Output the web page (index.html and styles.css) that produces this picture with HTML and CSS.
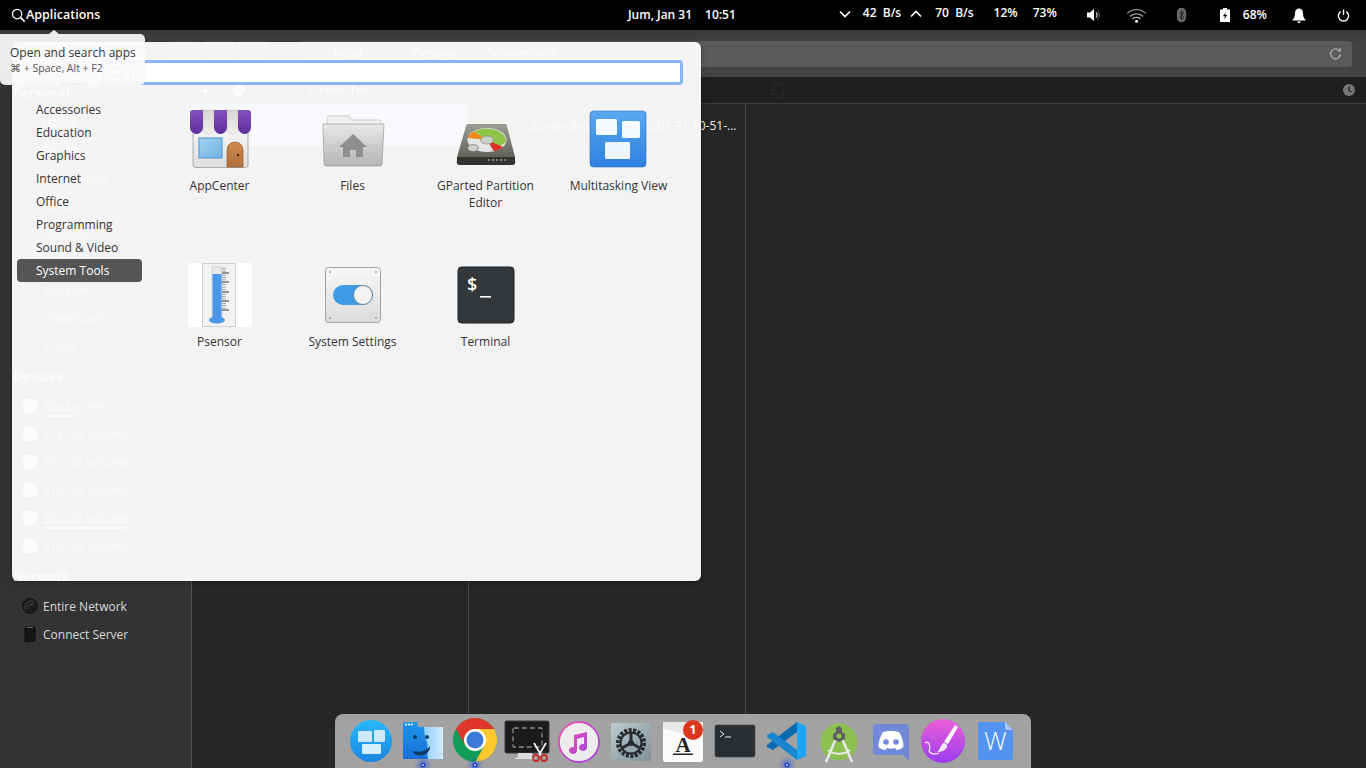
FILE: index.html
```html
<!DOCTYPE html>
<html lang="en">
<head>
<meta charset="utf-8">
<title>Desktop</title>
<link rel="stylesheet" href="styles.css">
</head>
<body>
<div class="screen">
  <header class="panel">
    <div class="panel-left">
      <svg class="i-search" viewBox="0 0 16 16"><circle cx="6.5" cy="6.5" r="5" fill="none" stroke="#fff" stroke-width="1.4"/><path d="M10.2 10.2 14.6 14.6" stroke="#fff" stroke-width="1.8"/></svg>
      <span class="apps-label">Applications</span>
    </div>
    <div class="panel-clock"><span>Jum, Jan 31</span><span>10:51</span></div>
    <div class="panel-right">
      <svg class="chev" viewBox="0 0 12 8"><path d="M1 1.5 6 6.5 11 1.5" fill="none" stroke="#fff" stroke-width="1.6"/></svg>
      <span class="net">42&nbsp; B/s</span>
      <svg class="chev" viewBox="0 0 12 8"><path d="M1 6.5 6 1.5 11 6.5" fill="none" stroke="#fff" stroke-width="1.6"/></svg>
      <span class="net net-up">70&nbsp; B/s</span>
      <span class="pct cpu">12%</span>
      <span class="pct mem">73%</span>
      <svg class="i-vol" viewBox="0 0 16 16"><path d="M1 5.5H4L8 2V14L4 10.500H1Z" fill="#fff"/><path d="M10 5.500A3.500 3.500 0 0 1 10 10.500" fill="none" stroke="#ccc" stroke-width="1.300"/><path d="M11.500 3.500A6.500 6.500 0 0 1 11.500 12.500" fill="none" stroke="#666" stroke-width="1"/></svg>
      <svg class="i-wifi" viewBox="0 0 22 16"><path d="M1 6A14 14 0 0 1 21 6" fill="none" stroke="#8a8a8a" stroke-width="1.200"/><path d="M4 9A10 10 0 0 1 18 9" fill="none" stroke="#bdbdbd" stroke-width="1.200"/><path d="M7 11.500A6 6 0 0 1 15 11.500" fill="none" stroke="#e6e6e6" stroke-width="1.300"/><circle cx="11" cy="14" r="1.600" fill="#fff"/></svg>
      <svg class="i-bt" viewBox="0 0 12 16"><rect x="1" y="0" width="10" height="16" rx="5" fill="#6a6a6a"/><path d="M3.500 5 8.500 10.500 6 13V3L8.500 5.500 3.500 11" fill="none" stroke="#1c1c1c" stroke-width="1"/></svg>
      <svg class="i-bat" viewBox="0 0 10 14"><path d="M3 0H7V1.500H10V14H0V1.500H3Z" fill="#fff"/><path d="M6 4 2.800 8.300H5L4 11.500 7.300 7H5Z" fill="#000"/></svg>
      <span class="pct bat">68%</span>
      <svg class="i-bell" viewBox="0 0 14 15"><path d="M7 0.500C9.800 0.500 11 3 11 5.500C11 8.500 12 10.500 13.500 11.800V12.500H0.500V11.800C2 10.500 3 8.500 3 5.500C3 3 4.200 0.500 7 0.500Z" fill="#fff"/><path d="M5 13.500H9L7.800 15H6.200Z" fill="#fff"/></svg>
      <svg class="i-pow" viewBox="0 0 14 14"><path d="M4 2.800A5.500 5.500 0 1 0 10 2.800" fill="none" stroke="#fff" stroke-width="1.500"/><path d="M7 0.500V6.500" stroke="#fff" stroke-width="1.500"/></svg>
    </div>
  </header>

  <section class="window">
    <div class="toolbar">
      <div class="view-btns"><span class="view-btn"></span><span class="view-btn"></span><span class="view-btn"></span></div>
      <div class="address">
        <span class="crumb crumb-first">Iqbal</span>
        <span class="crumb crumb-second">Pictures</span>
        <span class="crumb">Screenshots</span>
        <svg class="i-reload" viewBox="0 0 14 14"><path d="M11.500 4.500A5.300 5.300 0 1 0 12.300 8" fill="none" stroke="#a8a8a8" stroke-width="1.500"/><path d="M8.500 4.800H12.800V0.500Z" fill="#a8a8a8"/></svg>
      </div>
    </div>
    <div class="win-body">
      <aside class="sidebar">
        <div class="side-head">Personal</div>
        <div class="side-row"><i class="ico"></i>Home</div>
        <div class="side-row"><i class="ico"></i>Recent</div>
        <div class="side-row"><i class="ico"></i>Documents</div>
        <div class="side-row"><i class="ico"></i>Music</div>
        <div class="side-row"><i class="ico"></i>Pictures</div>
        <div class="side-row"><i class="ico"></i>Videos</div>
        <div class="side-row"><i class="ico"></i>Amikom</div>
        <div class="side-row"><i class="ico"></i>Downloads</div>
        <div class="side-row"><i class="ico"></i>Trash</div>
        <div class="side-head">Devices</div>
        <div class="side-row"><i class="ico ico-disk"></i>File System<span class="usage usage-low"></span></div>
        <div class="side-row"><i class="ico ico-disk"></i>128 GB Volume</div>
        <div class="side-row"><i class="ico ico-disk"></i>102 GB Volume</div>
        <div class="side-row"><i class="ico ico-disk"></i>215 GB Volume</div>
        <div class="side-row"><i class="ico ico-disk"></i>322 GB Volume<span class="usage usage-high"></span></div>
        <div class="side-row"><i class="ico ico-disk"></i>215 GB Volume</div>
        <div class="side-head">Network</div>
        <div class="side-row">
          <svg class="side-svg" viewBox="0 0 16 16"><circle cx="8" cy="8" r="7.500" fill="#1c1c1c" stroke="#111"/><path d="M3 11A7 7 0 0 1 11 3M6 11A4 4 0 0 1 11 6M8 8 13 3" fill="none" stroke="#444"/></svg>
          Entire Network
        </div>
        <div class="side-row">
          <svg class="side-svg" viewBox="0 0 16 16"><rect x="3" y="1" width="10" height="15" rx="1.500" fill="#161616" stroke="#0c0c0c"/><rect x="5" y="1" width="6" height="1" fill="#666"/></svg>
          Connect Server
        </div>
      </aside>
      <div class="files">
        <div class="files-bar">
          <span class="bar-plus">+</span>
          <svg class="bar-x" viewBox="0 0 12 12"><circle cx="6" cy="6" r="6" fill="#fff"/><path d="M3.500 3.500 8.500 8.500M8.500 3.500 3.500 8.500" stroke="#999" stroke-width="1.500"/></svg>
          <span class="bar-title">Screenshots</span>
          <svg class="i-spin" viewBox="0 0 16 16"><path d="M8 0V4M8 12V16M0 8H4M12 8H16M2.300 2.300 5 5M11 11 13.700 13.700M13.700 2.300 11 5M5 11 2.300 13.700" stroke="#2c2c2c" stroke-width="1.500"/></svg>
          <svg class="i-clock" viewBox="0 0 12 12"><circle cx="6" cy="6" r="6" fill="#777"/><path d="M6 2.500V6.500L8.500 8" fill="none" stroke="#202020" stroke-width="1.300"/></svg>
        </div>
        <div class="columns">
          <div class="column">
            <div class="file-row file-selected"><i class="thumb thumb-a"></i>Screenshots</div>
          </div>
          <div class="column">
            <div class="file-row"><i class="thumb thumb-b"></i>Screenshot from 2020-01-31 10-51-...</div>
          </div>
          <div class="column column-fill"></div>
        </div>
      </div>
    </div>
  </section>

  <div class="launcher">
    <div class="launcher-head">
      <div class="switcher"><span class="sw sw-dots">•••</span><span class="sw sw-on">▪▪▪</span></div>
      <div class="search">
        <svg class="search-ico" viewBox="0 0 16 16"><circle cx="6.500" cy="6.500" r="5" fill="none" stroke="#888" stroke-width="1.500"/><path d="M10.200 10.200 14.600 14.600" stroke="#888" stroke-width="2"/></svg>
        <span class="caret"></span>
      </div>
    </div>
    <div class="launcher-body">
      <nav class="cats">
        <div class="cat">Accessories</div>
        <div class="cat">Education</div>
        <div class="cat">Graphics</div>
        <div class="cat">Internet</div>
        <div class="cat">Office</div>
        <div class="cat">Programming</div>
        <div class="cat">Sound &amp; Video</div>
        <div class="cat cat-on">System Tools</div>
      </nav>
      <div class="grid">
        <div class="app">
          <svg class="app-ico" viewBox="0 0 64 64">
            <defs>
              <linearGradient id="ac-body" x1="0" y1="0" x2="0" y2="1"><stop offset="0" stop-color="#fafafa"/><stop offset="1" stop-color="#dedede"/></linearGradient>
              <linearGradient id="ac-win" x1="0" y1="0" x2="1" y2="1"><stop offset="0" stop-color="#a5d4f2"/><stop offset="1" stop-color="#6fb1e0"/></linearGradient>
              <linearGradient id="ac-door" x1="0" y1="0" x2="0" y2="1"><stop offset="0" stop-color="#d08a4e"/><stop offset="1" stop-color="#b0703c"/></linearGradient>
              <linearGradient id="ac-stripe" x1="0" y1="0" x2="0" y2="1"><stop offset="0" stop-color="#d8d6d2"/><stop offset="1" stop-color="#f2f0ec"/></linearGradient>
              <linearGradient id="ac-purple" x1="0" y1="0" x2="0" y2="1"><stop offset="0" stop-color="#8251bd"/><stop offset="1" stop-color="#5e2f98"/></linearGradient>
            </defs>
            <rect x="5" y="14" width="55" height="46.500" rx="2.500" fill="url(#ac-body)" stroke="#9a9a9a" stroke-width=".8"/>
            <rect x="11" y="31" width="23" height="20" fill="url(#ac-win)" stroke="#4d94cc"/>
            <path d="M39 60V43A8 8 0 0 1 55 43V60Z" fill="url(#ac-door)" stroke="#8c5a2e" stroke-width=".7"/>
            <circle cx="50" cy="48" r="1.200" fill="#5a2c10"/>
            <path d="M15 3H26V21.500A5.500 5.500 0 0 1 15 21.500ZM39 3H50V21.500A5.500 5.500 0 0 1 39 21.500Z" fill="url(#ac-stripe)" stroke="#bdbbb7" stroke-width=".5"/>
            <path d="M5 3H15V20.500A6.500 6.500 0 0 1 2 20.500V6A3 3 0 0 1 5 3ZM26 3H39V20.500A6.500 6.500 0 0 1 26 20.500ZM50 3H60A3 3 0 0 1 63 6V20.500A6.500 6.500 0 0 1 50 20.500Z" fill="url(#ac-purple)"/>
          </svg>
          <span class="app-name">AppCenter</span>
        </div>
        <div class="app">
          <svg class="app-ico" viewBox="0 0 64 64">
            <defs><linearGradient id="fo" x1="0" y1="0" x2="0" y2="1"><stop offset="0" stop-color="#e8e8e8"/><stop offset="1" stop-color="#b4b4b4"/></linearGradient></defs>
            <path d="M6 11A2 2 0 0 1 8 9H28L30 13H58A2 2 0 0 1 60 15V24H6Z" fill="#f2f2f2" stroke="#bdbdbd" stroke-width=".7"/>
            <path d="M2 17H63L61 57A2 2 0 0 1 59 59H5A2 2 0 0 1 3 57Z" fill="url(#fo)" stroke="#9a9a9a" stroke-width=".7"/>
            <path d="M32 27 46 40H42V50H35V43H29V50H22V40H18Z" fill="#8f8f8f"/>
          </svg>
          <span class="app-name">Files</span>
        </div>
        <div class="app">
          <svg class="app-ico" viewBox="0 0 64 64">
            <defs><linearGradient id="gp" x1="0" y1="0" x2="0" y2="1"><stop offset="0" stop-color="#9c9c96"/><stop offset="1" stop-color="#55554f"/></linearGradient></defs>
            <path d="M12 19A2 2 0 0 1 14 17H51A2 2 0 0 1 53 19L61 50V54A3 3 0 0 1 58 58H6A3 3 0 0 1 3 54V50Z" fill="url(#gp)"/>
            <path d="M3 50H61V54A3 3 0 0 1 58 58H6A3 3 0 0 1 3 54Z" fill="#33332f"/>
            <ellipse cx="33" cy="33" rx="19.500" ry="12" fill="#e6e6e6"/>
            <path d="M33 33 20 24.500A19.500 12 0 0 1 52 35L42 42Z" fill="#8fc547"/>
            <path d="M33 33 13.500 31A19.500 12 0 0 1 20 24.500Z" fill="#f08a1e"/>
            <path d="M33 33 49 40A19.500 12 0 0 1 40 44.500Z" fill="#d9302a"/>
            <ellipse cx="33" cy="33" rx="6.500" ry="4" fill="#c9cfc2" stroke="#888" stroke-width=".6"/>
            <ellipse cx="19" cy="41" rx="5.500" ry="3.500" fill="#d0d0d0" stroke="#666" stroke-width=".6"/>
            <path d="M34 53H52" stroke="#999" stroke-width="1.500" stroke-dasharray="2 2"/>
          </svg>
          <span class="app-name">GParted Partition Editor</span>
        </div>
        <div class="app">
          <svg class="app-ico" viewBox="0 0 64 64">
            <defs><linearGradient id="mv" x1="0" y1="0" x2="0" y2="1"><stop offset="0" stop-color="#5aa9ef"/><stop offset="1" stop-color="#2f80e0"/></linearGradient></defs>
            <rect x="3" y="4" width="56" height="56" rx="3.500" fill="url(#mv)" stroke="#2a6fc4" stroke-width=".6"/>
            <rect x="9" y="12" width="21" height="16" rx="1.500" fill="#f4f9fd"/>
            <rect x="35" y="14" width="18" height="17" rx="1.500" fill="#f4f9fd"/>
            <rect x="18" y="35" width="25" height="17" rx="1.500" fill="#eef6fc"/>
          </svg>
          <span class="app-name">Multitasking View</span>
        </div>
        <div class="app">
          <svg class="app-ico app-white" viewBox="0 0 64 64">
            <rect x="14.500" y="0.500" width="33" height="63" fill="#f2f2f2" stroke="#cfcfcf"/>
            <rect x="24" y="4" width="10" height="54" fill="#e8e8e8" stroke="#c4c4c4" stroke-width=".6"/>
            <rect x="24.500" y="11" width="9" height="47" fill="#4a97ec"/>
            <ellipse cx="29" cy="57" rx="8" ry="3.500" fill="#4a97ec"/>
            <path d="M34 10H41M34 19H41M34 29H41M34 38H41M34 47H41" stroke="#222" stroke-width=".9"/>
            <path d="M34 5.500H38M34 8H38M34 12.300H38M34 14.500H38M34 16.800H38M34 21.500H38M34 24H38M34 26.500H38M34 31.500H38M34 33.700H38M34 36H38M34 40.500H38M34 42.500H38M34 45H38" stroke="#777" stroke-width=".6"/>
          </svg>
          <span class="app-name">Psensor</span>
        </div>
        <div class="app">
          <svg class="app-ico" viewBox="0 0 64 64">
            <defs><linearGradient id="ss" x1="0" y1="0" x2="0" y2="1"><stop offset="0" stop-color="#f7f7f7"/><stop offset="1" stop-color="#dcdcdc"/></linearGradient></defs>
            <rect x="4.500" y="4.500" width="55" height="55" rx="3" fill="url(#ss)" stroke="#a2a2a2"/>
            <circle cx="9" cy="9" r="1" fill="#999"/><circle cx="55" cy="9" r="1" fill="#999"/><circle cx="9" cy="55" r="1" fill="#999"/><circle cx="55" cy="55" r="1" fill="#999"/>
            <rect x="12" y="22" width="40" height="20" rx="10" fill="#3e9be4"/>
            <circle cx="42" cy="32" r="9.500" fill="#f3f3f3" stroke="#6e8fa8"/>
          </svg>
          <span class="app-name">System Settings</span>
        </div>
        <div class="app">
          <svg class="app-ico" viewBox="0 0 64 64">
            <rect x="4" y="4" width="56" height="56" rx="3.500" fill="#33373a" stroke="#1f2224"/>
            <text class="term-glyph" x="13" y="28">$</text>
            <rect x="26" y="33" width="11" height="1.600" fill="#fff"/>
          </svg>
          <span class="app-name">Terminal</span>
        </div>
      </div>
    </div>
  </div>

  <div class="tooltip">
    <div class="tip-main">Open and search apps</div>
    <div class="tip-sub">⌘ + Space, Alt + F2</div>
  </div>

  <footer class="dock">
    <svg class="dock-ico" viewBox="0 0 52 54">
      <defs><linearGradient id="d1" x1="0" y1="0" x2="0" y2="1"><stop offset="0" stop-color="#29b8fb"/><stop offset="1" stop-color="#1a86e0"/></linearGradient></defs>
      <circle cx="26" cy="27" r="21" fill="url(#d1)"/>
      <rect x="13" y="17" width="14" height="11" rx="1" fill="#cfe9fb"/><rect x="29" y="16" width="11" height="12" rx="1" fill="#cfe9fb"/><rect x="17" y="30" width="19" height="10" rx="1" fill="#d7eefc"/>
    </svg>
    <svg class="dock-ico" viewBox="0 0 52 54">
      <defs><linearGradient id="d2" x1="0" y1="0" x2="0" y2="1"><stop offset="0" stop-color="#1c96ee"/><stop offset="1" stop-color="#1a6fd6"/></linearGradient><linearGradient id="d2b" x1="0" y1="0" x2="1" y2="0"><stop offset="0" stop-color="#8fd0fb"/><stop offset="1" stop-color="#d4eafc"/></linearGradient><radialGradient id="glow"><stop offset="0" stop-color="#2a52d8" stop-opacity=".6"/><stop offset="1" stop-color="#2a52d8" stop-opacity="0"/></radialGradient></defs>
      <path d="M6 10A2 2 0 0 1 8 8H20L21 13H46V45H6Z" fill="url(#d2)"/>
      <path d="M27 13H46V45H31C29 38 33 32 28 24Z" fill="url(#d2b)"/>
      <circle cx="9" cy="10.500" r="1" fill="#fff"/><circle cx="12" cy="10.500" r="1" fill="#fff"/><circle cx="15" cy="10.500" r="1" fill="#fff"/>
      <circle cx="18" cy="23" r="2" fill="#123a66"/><circle cx="30" cy="23" r="2" fill="#123a66"/>
      <path d="M16 37C22 39 30 37 33 32C34 38 26 43 20 41C18 40 16 39 16 37Z" fill="#123a66"/>
      <circle cx="26" cy="51" r="9" fill="url(#glow)"/><circle cx="26" cy="51" r="2.500" fill="#1b3fd2"/><circle cx="26" cy="51" r="1" fill="#dfe6ff"/>
    </svg>
    <svg class="dock-ico" viewBox="0 0 52 54">
      <circle cx="26" cy="26" r="22" fill="#0f9d58"/>
      <path d="M26 15H45.050A22 22 0 0 1 26 48L35.500 31.500Z" fill="#fdc92f"/>
      <path d="M6.950 15A22 22 0 0 1 45.050 15H26L16.500 31.500Z" fill="#e0352b"/>
      <circle cx="26" cy="26" r="11" fill="#fff"/><circle cx="26" cy="26" r="8.500" fill="#3c78d8"/>
      <circle cx="26" cy="51" r="9" fill="url(#glow)"/><circle cx="26" cy="51" r="2.500" fill="#1b3fd2"/><circle cx="26" cy="51" r="1" fill="#dfe6ff"/>
    </svg>
    <svg class="dock-ico" viewBox="0 0 52 54">
      <rect x="4" y="7" width="44" height="32" rx="1.500" fill="#1b1b1e" stroke="#3a3a3a"/>
      <rect x="12" y="14" width="29" height="19" rx="1" fill="none" stroke="#8a8a8a" stroke-width="1.300" stroke-dasharray="5 3"/>
      <path d="M17 39H31V43L35 45H13L17 43Z" fill="#dcdcdc"/>
      <path d="M33 29 40 41M45 29 38 41" stroke="#eee" stroke-width="1.800"/>
      <circle cx="35" cy="44" r="3" fill="none" stroke="#c42d2d" stroke-width="1.800"/><circle cx="43" cy="44" r="3" fill="none" stroke="#c42d2d" stroke-width="1.800"/>
    </svg>
    <svg class="dock-ico" viewBox="0 0 52 54">
      <defs><linearGradient id="d5" x1="0" y1="0" x2="1" y2="1"><stop offset="0" stop-color="#f04eb0"/><stop offset="1" stop-color="#a045e0"/></linearGradient></defs>
      <circle cx="26" cy="28" r="20" fill="#ececec" stroke="url(#d5)" stroke-width="1.800"/>
      <path d="M21 21 34 18V33.500A4 3.500 0 1 1 31 30V23L24 24.700V36.500A4 3.500 0 1 1 21 33Z" fill="url(#d5)"/>
    </svg>
    <svg class="dock-ico" viewBox="0 0 52 54">
      <defs><linearGradient id="d6" x1="0" y1="0" x2="1" y2="1"><stop offset="0" stop-color="#bcccd2"/><stop offset="1" stop-color="#7e8f96"/></linearGradient></defs>
      <rect x="6" y="9" width="40" height="38" rx="2" fill="url(#d6)"/>
      <circle cx="26" cy="29" r="13" fill="none" stroke="#2a2d30" stroke-width="4" stroke-dasharray="3 1.500"/>
      <circle cx="26" cy="29" r="10.500" fill="none" stroke="#2a2d30" stroke-width="2"/>
      <path d="M26 29V19M26 29 17 34M26 29 35 34" stroke="#2a2d30" stroke-width="3"/>
      <circle cx="26" cy="29" r="3" fill="#2a2d30"/>
    </svg>
    <svg class="dock-ico" viewBox="0 0 52 54">
      <rect x="6" y="8" width="40" height="40" rx="2" fill="#fbfbfb"/>
      <path d="M6 8H46V14L26 20 6 14Z" fill="#e8e8e8"/>
      <text class="doc-a" x="26" y="38">A</text>
      <rect x="16" y="39.500" width="20" height="1.500" fill="#222"/>
      <circle cx="36" cy="16" r="10" fill="#d9351f"/>
      <text class="badge-num" x="36" y="20">1</text>
    </svg>
    <svg class="dock-ico" viewBox="0 0 52 54">
      <rect x="6" y="11" width="40" height="32" rx="2" fill="#2b2e31" stroke="#3f4346" stroke-width=".6"/>
      <path d="M11 17 15 20 11 23" fill="none" stroke="#e8e8e8" stroke-width="1"/>
      <path d="M16 23H22" stroke="#e8e8e8" stroke-width="1"/>
    </svg>
    <svg class="dock-ico" viewBox="0 0 52 54">
      <path d="M36 8V18L12 36 6 33V31Z" fill="#0a6ab0"/>
      <path d="M6 23V21L12 18 36 36V46Z" fill="#1a86d0"/>
      <path d="M36 8 45 12V42L36 46Z" fill="#1fa5f5"/>
      <circle cx="26" cy="51" r="9" fill="url(#glow)"/><circle cx="26" cy="51" r="2.500" fill="#1b3fd2"/><circle cx="26" cy="51" r="1" fill="#dfe6ff"/>
    </svg>
    <svg class="dock-ico" viewBox="0 0 52 54">
      <circle cx="26" cy="28" r="18.500" fill="#8cc152"/>
      <path d="M24 22 13 48M28 22 39 48" stroke="#e8e8e8" stroke-width="2.500"/>
      <path d="M15 36C21 41 31 41 37 36" fill="none" stroke="#e8e8e8" stroke-width="2"/>
      <path d="M26 12 29 14V18L32 20V25L26 28 20 25V20L23 18V14Z" fill="#5f5f5f"/>
      <circle cx="26" cy="22" r="2.500" fill="#8cc152"/>
    </svg>
    <svg class="dock-ico" viewBox="0 0 52 54">
      <path d="M12 10H40A4 4 0 0 1 44 14V47L38 41H12A4 4 0 0 1 8 37V14A4 4 0 0 1 12 10Z" fill="#7289da"/>
      <path d="M18 18C22 16.500 30 16.500 34 18C37 23 38.500 27 38.500 33C36.500 35 33.500 36 31.500 36L30 34C27.500 35 24.500 35 22 34L20.500 36C18.500 36 15.500 35 13.500 33C13.500 27 15 23 18 18Z" fill="#fff"/>
      <circle cx="21" cy="28" r="2.800" fill="#7289da"/><circle cx="31" cy="28" r="2.800" fill="#7289da"/>
    </svg>
    <svg class="dock-ico" viewBox="0 0 52 54">
      <defs><linearGradient id="d12" x1="0" y1="0" x2="0" y2="1"><stop offset="0" stop-color="#ec5fd8"/><stop offset="1" stop-color="#9a3cf0"/></linearGradient></defs>
      <circle cx="26" cy="27" r="22" fill="url(#d12)"/>
      <path d="M38 11 41 13 31 30 27 28Z" fill="#fff"/>
      <path d="M26 29C29 29 31 31 30 33C28 37 24 38 20 38C23 36 23 32 26 29Z" fill="#f3e6ff"/>
      <path d="M8 29C12 26 14 33 12 37C14 41 20 40 22 39" fill="none" stroke="#f3e6ff" stroke-width="1.300"/>
    </svg>
    <svg class="dock-ico" viewBox="0 0 52 54">
      <path d="M11 8H36L44 16V44A2 2 0 0 1 42 46H11A2 2 0 0 1 9 44V10A2 2 0 0 1 11 8Z" fill="#5193ef"/>
      <path d="M36 8 44 16H38A2 2 0 0 1 36 14Z" fill="#a9c9f7"/>
      <text class="doc-w" x="26.500" y="36">W</text>
    </svg>
  </footer>
</div>
</body>
</html>
```
FILE: styles.css
```css
* { box-sizing: border-box; }
html, body { margin: 0; padding: 0; }
body { font-family: "Open Sans", "Noto Sans", sans-serif; font-size: 12px; background: #262626; }
svg { display: block; flex: none; }

.screen { position: relative; width: 1366px; height: 768px; overflow: hidden; display: flex; flex-direction: column; }

/* top panel */
.panel { height: 30px; flex: none; background: #000; color: #fff; font-weight: 600; font-size: 12px; display: grid; grid-template-columns: 628px auto 1fr; align-items: center; }
.panel-left { display: flex; align-items: center; padding-left: 11px; }
.i-search { width: 15px; height: 15px; }
.apps-label { font-size: 12.5px; margin-top: -2px; }
.panel-clock { display: flex; gap: 13px; margin-top: -2px; }
.panel-right { display: flex; align-items: center; }
.chev { width: 12px; height: 8px; margin-top: -3px; }
.panel-right > .chev:first-child { margin-left: 103px; }
.net { margin-left: 12px; margin-top: -6px; white-space: nowrap; }
.net + .chev { margin-left: 9px; }
.net-up { margin-left: 13px; }
.pct { margin-top: -5px; }
.cpu { margin-left: 20px; }
.mem { margin-left: 15px; }
.i-vol { width: 16px; height: 16px; margin-left: 29px; }
.i-wifi { width: 21px; height: 15px; margin-left: 24px; }
.i-bt { width: 11px; height: 16px; margin-left: 29px; }
.i-bat { width: 10px; height: 14px; margin-left: 33px; }
.bat { margin-left: 13px; margin-top: -2px; }
.i-bell { width: 14px; height: 15px; margin-left: 25px; }
.i-pow { width: 13px; height: 13px; margin-left: 31px; }

/* file manager window */
.window { flex: 1; display: flex; flex-direction: column; min-height: 0; }
.toolbar { height: 47px; flex: none; background: linear-gradient(#383838, #434343 30%, #434343); display: flex; align-items: center; padding-left: 168px; padding-right: 14px; }
.view-btns { display: flex; gap: 2px; margin-right: 29px; }
.view-btn { width: 32px; height: 26px; background: #565656; border-radius: 3px; }
.address { flex: 1; height: 26px; background: #5a5a5a; border-radius: 3px; display: flex; align-items: center; color: #fff; padding-right: 10px; }
.crumb { margin-left: 31px; }
.crumb-first { margin-left: 37px; }
.crumb-second { margin-left: 50px; }
.i-reload { width: 13px; height: 13px; margin-left: auto; }
.win-body { flex: 1; display: flex; min-height: 0; }
.sidebar { width: 192px; flex: none; background: #333; border-right: 1px solid #4b5560; color: #d8d8d8; }
.side-head { height: 32px; line-height: 32px; padding-left: 13px; font-weight: 700; font-size: 13px; color: #eee; }
.side-head:first-child { height: 31px; line-height: 30px; }
.side-row { position: relative; height: 28px; display: flex; align-items: center; padding-left: 43px; }
.ico { position: absolute; left: 23px; top: 7px; width: 14px; height: 14px; border-radius: 2px; background: #1a1a1a; }
.ico-disk { background: #fff; }
.side-svg { position: absolute; left: 22px; top: 6px; width: 16px; height: 16px; }
.usage { position: absolute; left: 43px; width: 117px; height: 2px; bottom: 3px; background: #777; }
.usage-low { background: linear-gradient(90deg, #fff 25%, #777 25%); }
.usage-high { background: linear-gradient(90deg, #fff 70%, #777 70%); }
.files { flex: 1; display: flex; flex-direction: column; min-width: 0; }
.files-bar { height: 27px; flex: none; background: #1f1f1f; border-bottom: 1px solid #3a3a3a; display: flex; align-items: center; color: #fff; padding: 0 11px 1px 0; }
.bar-plus { margin-left: 8px; font-size: 18px; font-weight: 700; line-height: 1; }
.bar-x { width: 12px; height: 12px; margin-left: 23px; }
.bar-title { margin-left: 62px; }
.i-spin { width: 16px; height: 16px; margin-left: 394px; }
.i-clock { width: 12px; height: 12px; margin-left: auto; }
.columns { flex: 1; display: flex; background: #262626; color: #eee; }
.column { width: 277px; border-right: 1px solid #4a4a4a; }
.column-fill { flex: 1; border-right: 0; }
.file-row { height: 42px; display: flex; align-items: center; white-space: nowrap; }
.file-selected { background: #7aa4ee; }
.thumb { flex: none; width: 26px; height: 24px; border: 1px solid #888; }
.thumb-a { margin: 0 17px 0 18px; }
.thumb-b { margin: 0 23px 0 12px; }

/* applications menu */
.launcher { position: absolute; left: 12px; top: 42px; width: 689px; height: 539px; background: rgba(252, 252, 252, .96); border-radius: 6px; box-shadow: 0 0 0 1px rgba(0,0,0,.12), 0 2px 6px rgba(0,0,0,.2); display: flex; flex-direction: column; color: #333; }
.launcher-head { height: 56px; flex: none; display: flex; align-items: center; padding: 5px 18px 0; gap: 14px; }
.switcher { display: flex; width: 57px; height: 25px; font-size: 8px; }
.sw { flex: 1; display: flex; align-items: center; justify-content: center; color: #666; background: #eee; }
.sw-on { color: #3689e6; border-bottom: 2px solid #3689e6; background: #e6eefb; }
.search { flex: 1; height: 25px; background: #fff; border: 3px solid #8ab4f8; border-radius: 4px; display: flex; align-items: center; padding-left: 7px; }
.search-ico { width: 14px; height: 14px; }
.caret { width: 1px; height: 16px; background: #999; margin-left: 5px; }
.launcher-body { flex: 1; display: flex; min-height: 0; }
.cats { width: 141px; flex: none; padding-left: 5px; }
.cat { height: 23px; line-height: 23px; padding-left: 19px; color: #333; border-radius: 4px; width: 125px; white-space: nowrap; }
.cat-on { background: #555; color: #fff; }
.grid { flex: 1; display: grid; grid-template-columns: repeat(4, 133px); grid-auto-rows: 156px; padding-top: 9px; align-content: start; }
.app { display: flex; flex-direction: column; align-items: center; text-align: center; }
.app-ico { width: 64px; height: 64px; }
.app-white { background: #fff; }
.app-name { display: block; width: 112px; margin-top: 6px; line-height: 17px; color: #333; }
.term-glyph { font-family: "Open Sans", sans-serif; font-size: 18px; font-weight: 600; fill: #fff; }

/* tooltip */
.tooltip { position: absolute; left: 0; top: 34px; width: 145px; height: 51px; background: rgba(250, 250, 250, .93); border-radius: 0 5px 5px 5px; padding: 10px 0 0 10px; color: #333; }
.tooltip::before { content: ""; position: absolute; left: 49px; top: -4px; border: 5px solid transparent; border-top: 0; border-bottom: 4px solid rgba(250, 250, 250, .93); }
.tip-main { line-height: 17px; }
.tip-sub { font-size: 10.5px; line-height: 14px; color: #555; }

/* dock */
.dock { position: absolute; left: 335px; top: 714px; width: 696px; height: 54px; background: #a2a2a2; border-radius: 8px 8px 0 0; display: flex; padding: 0 10px; }
.dock-ico { width: 52px; height: 54px; }
.doc-a { font-family: "Liberation Serif", serif; font-size: 21px; font-weight: 700; fill: #222; text-anchor: middle; }
.doc-w { font-family: "Open Sans", sans-serif; font-weight: 300; font-size: 25px; fill: #fff; text-anchor: middle; }
.badge-num { font-family: "Open Sans", sans-serif; font-size: 12px; font-weight: 700; fill: #fff; text-anchor: middle; }
```
